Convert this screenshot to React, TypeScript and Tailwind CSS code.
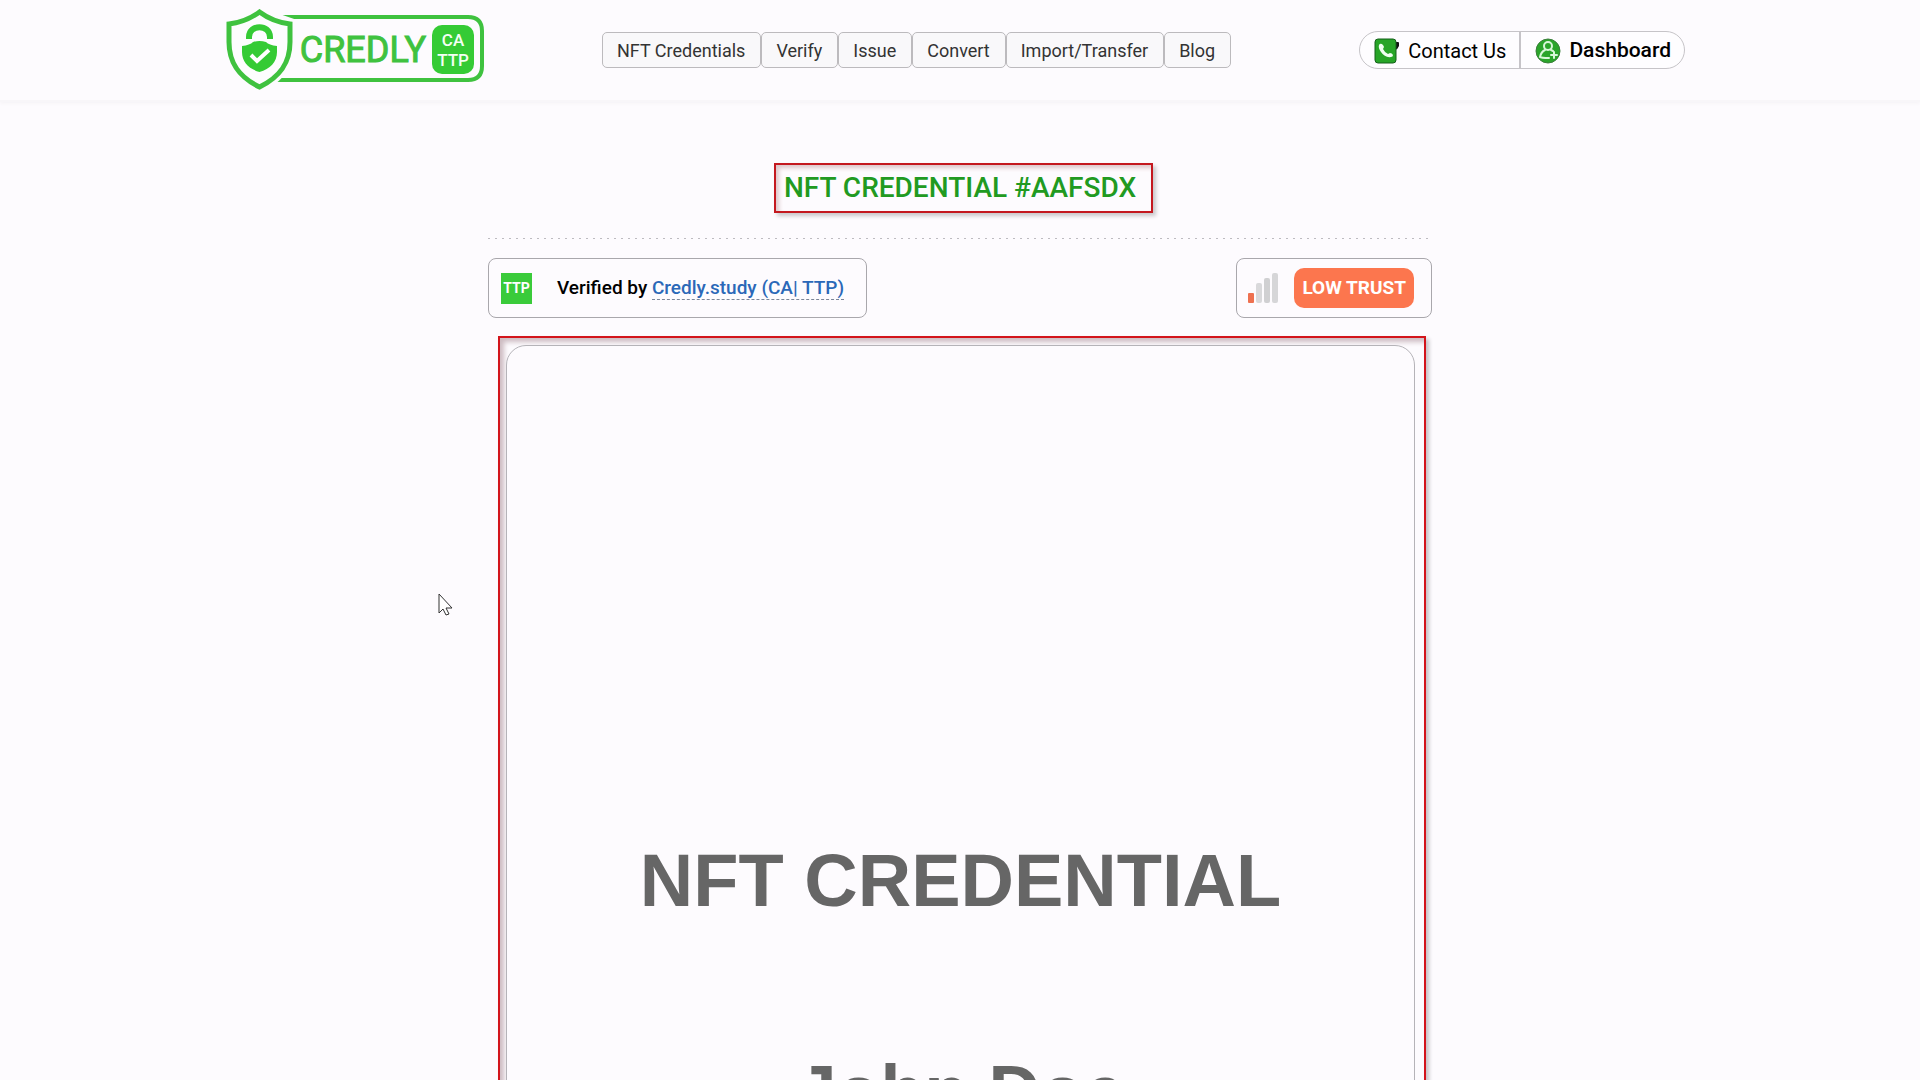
import React from "react";

const NAV_ITEMS = ["NFT Credentials", "Verify", "Issue", "Convert", "Import/Transfer", "Blog"];

function Logo() {
  return (
    <svg
      viewBox="0 0 258 82"
      className="h-[82px] w-[258px] shrink-0"
      role="img"
      aria-label="Credly CA TTP"
      fontFamily="Roboto, sans-serif"
    >
      <path
        d="M54 8 H242 Q256 8 256 22 V57 Q256 71 242 71 H51"
        fill="none"
        stroke="#3fc23f"
        strokeWidth="4"
      />
      <path d="M33.500 -2 L71 11 V34 Q70 66 33.500 85 Z" fill="#fdfbfe" />
      <path
        d="M33.500 3 Q47 13 64 15 V33 C64 54 54 68 33.500 78 C13 68 3 54 3 33 V15 Q20 13 33.500 3 Z"
        fill="#fdfdfe"
        stroke="#3fc23f"
        strokeWidth="5"
      />
      <path d="M23 30 V28 C23 15 44 15 44 28 V30" fill="none" stroke="#35cb35" strokeWidth="6" />
      <path
        d="M16 37 Q24 36 27 33 Q33.500 31 40 33 Q43 36 51 37 V43 C51 53 44 60 33.500 63 C23 60 16 53 16 43 Z"
        fill="#35cb35"
      />
      <path d="M25 46 L31 52 L43 41" fill="none" stroke="#fff" strokeWidth="4" />
      <text x="137" y="53" textAnchor="middle" fontSize="36" fill="#3fc23f" stroke="#3fc23f">
        CREDLY
      </text>
      <rect x="206" y="16" width="42" height="49" rx="10" fill="#35cb35" />
      <g fill="#f4fff4" fontSize="17" fontWeight="500" textAnchor="middle">
        <text x="227" y="37">CA</text>
        <text x="227" y="57">TTP</text>
      </g>
    </svg>
  );
}

function PhoneIcon() {
  return (
    <svg viewBox="0 0 26 26" className="size-[26px]" aria-hidden="true">
      <path d="M20 4 H24 Q25 4 25 5 V8 Q24 11 21 12 Z" fill="#111" />
      <rect x="1" y="1" width="21" height="24" rx="3" fill="#27a527" stroke="#14601a" />
      <path
        d="M5 7 Q6 5 8 6 Q10 8 10 9 L9 11 Q11 15 14 16 L16 15 Q18 15 19 17 Q19 19 17 19 Q11 20 7 14 Q4 10 5 7 Z"
        fill="#effff0"
      />
    </svg>
  );
}

function UserPlusIcon() {
  return (
    <svg viewBox="0 0 26 26" className="size-[26px]" aria-hidden="true">
      <circle cx="13" cy="13" r="12" fill="#2ba52b" stroke="#3c7f3c" />
      <g fill="none" stroke="#d9f7d9" strokeWidth="2" strokeLinecap="round">
        <circle cx="13" cy="8" r="4" />
        <path d="M10 12 Q6 14 5 19 Q6 20 14 20" />
        <path d="M16 12 L18 13 M19 14 V20 M16 17 H22" />
      </g>
    </svg>
  );
}

function SignalIcon() {
  return (
    <svg viewBox="0 0 32 32" className="size-8" aria-hidden="true">
      <rect x="0" y="21" width="6" height="10" rx="1" fill="#ee7150" />
      <rect x="8" y="11" width="6" height="20" rx="2" fill="#d9d9db" />
      <rect x="16" y="6" width="6" height="25" rx="2" fill="#d0d0d2" />
      <rect x="24" y="1" width="6" height="30" rx="2" fill="#d6d6d8" />
    </svg>
  );
}

export default function App() {
  return (
    <div className="relative flex h-screen flex-col overflow-hidden bg-[#fdfbfe] font-[Roboto,sans-serif] text-black">
      <header className="shrink-0 border-b-2 border-[#f8f6f9] shadow-[0_1px_4px_#f4f2f5]">
        <div className="mx-auto flex h-[100px] max-w-[1468px] items-center pr-[9px]">
          <a href="#home">
            <Logo />
          </a>
          <nav className="ml-[118px] flex" aria-label="Main">
            {NAV_ITEMS.map((item) => (
              <a
                key={item}
                href="#"
                className="flex h-9 items-center rounded-[5px] border border-[#bcbabd] bg-[#f9f8fa] pt-px pr-[15px] pl-[14px] text-lg whitespace-nowrap text-[#333]"
              >
                {item}
              </a>
            ))}
          </nav>
          <div className="ml-auto flex h-[38px] rounded-full border border-[#c6c4c8] bg-[#fefdff] text-xl whitespace-nowrap">
            <a href="#contact" className="flex items-center gap-2 border-r-2 border-[#c6c4c8] pt-px pr-[13px] pl-[14px]">
              <PhoneIcon />
              Contact Us
            </a>
            <a href="#dashboard" className="flex items-center gap-2 pt-px pr-[13px] pl-[14px] text-[21px] font-medium">
              <UserPlusIcon />
              Dashboard
            </a>
          </div>
        </div>
      </header>

      <main className="mx-auto w-full max-w-[944px]">
        <div className="flex justify-center pt-[61px]">
          <h1 className="ml-[7px] border-2 border-[#c4181f] pt-[5px] pr-[15px] pb-[5px] pl-2 text-[28px] leading-9 font-medium whitespace-nowrap text-[#219a21] shadow-[3px_3px_4px_#c9c7ca,inset_3px_3px_4px_#dcc6c9]">
            NFT CREDENTIAL #AAFSDX
          </h1>
        </div>
        <hr className="mt-[25px] h-px border-0 bg-[repeating-linear-gradient(90deg,#bdbbc0_0_2px,transparent_2px_7px)]" />

        <div className="mt-[19px] flex justify-between">
          <div className="flex h-[60px] items-center rounded-lg border border-[#a9a7ac] pr-[22px] pl-3 text-[19px] font-medium whitespace-nowrap">
            <span className="flex size-[31px] items-center justify-center bg-[#3acb3a] text-sm font-bold text-white">
              TTP
            </span>
            <p className="ml-[25px]">
              Verified by{" "}
              <a href="#issuer" className="border-b border-dashed border-[#7c8698] text-[#2b68b8]">
                Credly.study (CA| TTP)
              </a>
            </p>
          </div>
          <div className="flex h-[60px] items-center gap-[14px] rounded-lg border border-[#a9a7ac] pr-[17px] pl-[11px]">
            <SignalIcon />
            <span className="flex h-10 items-center rounded-[10px] bg-[#fc764e] px-2 text-[19px] font-bold whitespace-nowrap text-white">
              LOW TRUST
            </span>
          </div>
        </div>

        <section className="mt-[18px] mr-[6px] ml-[10px] border-2 border-[#d3141b] px-[6px] pt-[7px] shadow-[3px_3px_4px_#c4c2c5,inset_4px_4px_5px_#cdbcc2]">
          <article className="mr-[3px] flex flex-col items-center rounded-[20px] border border-[#b5b3b8] bg-[#fdfbfe] pt-[491px] font-['Liberation_Sans',Arial,sans-serif] text-[74px] leading-[88px] font-bold whitespace-nowrap text-[#666]">
            <h2>NFT CREDENTIAL</h2>
            <p className="mt-[122px] text-[72px]">John Doe</p>
          </article>
        </section>
      </main>

      <svg viewBox="0 0 16 24" className="absolute top-[593px] left-[438px] h-6 w-4" aria-hidden="true">
        <path
          d="M1 1 V20 L5 16 L8 22 L11 21 L8 15 H14 Z"
          fill="#fff"
          stroke="#333"
          strokeLinejoin="round"
        />
      </svg>
    </div>
  );
}
